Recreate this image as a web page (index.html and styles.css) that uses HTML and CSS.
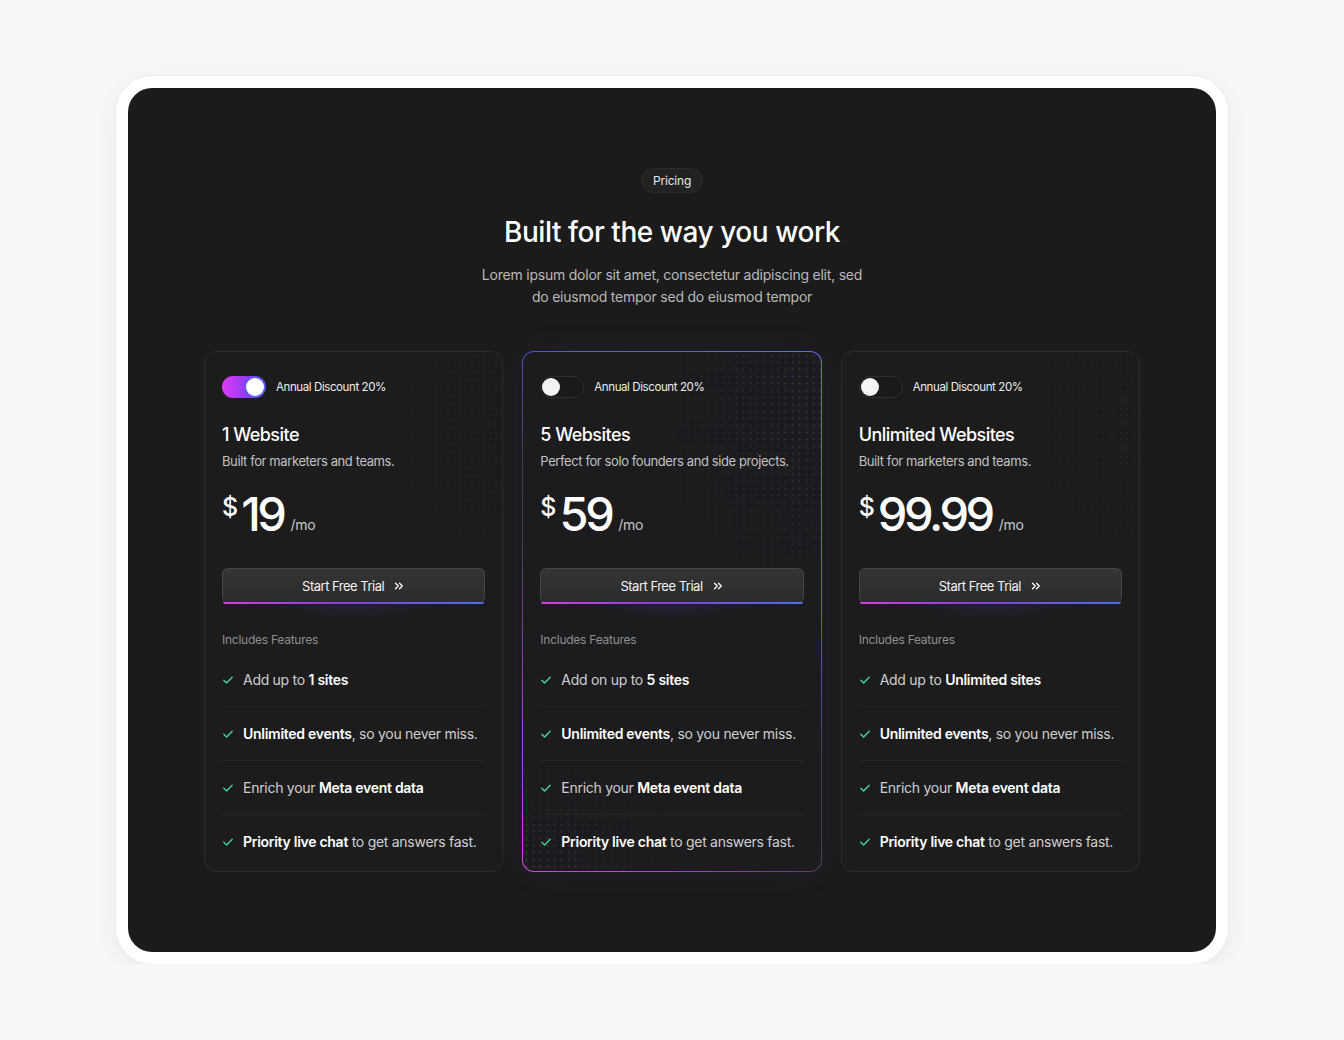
FILE: index.html
```html
<!DOCTYPE html>
<html lang="en">
<head>
<meta charset="utf-8">
<title>Pricing</title>
<link rel="stylesheet" href="styles.css">
</head>
<body>
<div class="frame">
  <main class="panel">
    <header class="head">
      <span class="pill">Pricing</span>
      <h1 class="title">Built for the way you work</h1>
      <p class="sub">Lorem ipsum dolor sit amet, consectetur adipiscing elit, sed do eiusmod tempor sed do eiusmod tempor</p>
    </header>

    <section class="cards">
      <article class="card">
        <div class="toggle-row"><span class="toggle on"><span class="knob"></span></span><span class="toggle-label">Annual Discount 20%</span></div>
        <h2 class="plan">1 Website</h2>
        <p class="desc">Built for marketers and teams.</p>
        <div class="price"><span class="cur">$</span><span class="amt">19</span><span class="per">/mo</span></div>
        <button class="cta">Start Free Trial <svg width="12" height="12" viewBox="0 0 12 12"><path d="M2.5 3.2 L5.3 6 L2.5 8.8 M6.5 3.2 L9.3 6 L6.5 8.8" fill="none" stroke="#fff" stroke-width="1.3" stroke-linecap="round" stroke-linejoin="round"/></svg></button>
        <p class="inc">Includes Features</p>
        <ul class="feats">
          <li><svg class="chk" viewBox="0 0 12 12"><path d="M1.8 6.3 L4.6 9 L10.2 3.2"/></svg><span>Add up to <b>1 sites</b></span></li>
          <li><svg class="chk" viewBox="0 0 12 12"><path d="M1.8 6.3 L4.6 9 L10.2 3.2"/></svg><span><b>Unlimited events</b>, so you never miss.</span></li>
          <li><svg class="chk" viewBox="0 0 12 12"><path d="M1.8 6.3 L4.6 9 L10.2 3.2"/></svg><span>Enrich your <b>Meta event data</b></span></li>
          <li><svg class="chk" viewBox="0 0 12 12"><path d="M1.8 6.3 L4.6 9 L10.2 3.2"/></svg><span><b>Priority live chat</b> to get answers fast.</span></li>
        </ul>
      </article>

      <article class="card featured">
        <div class="toggle-row"><span class="toggle"><span class="knob"></span></span><span class="toggle-label">Annual Discount 20%</span></div>
        <h2 class="plan">5 Websites</h2>
        <p class="desc">Perfect for solo founders and side projects.</p>
        <div class="price"><span class="cur">$</span><span class="amt">59</span><span class="per">/mo</span></div>
        <button class="cta">Start Free Trial <svg width="12" height="12" viewBox="0 0 12 12"><path d="M2.5 3.2 L5.3 6 L2.5 8.8 M6.5 3.2 L9.3 6 L6.5 8.8" fill="none" stroke="#fff" stroke-width="1.3" stroke-linecap="round" stroke-linejoin="round"/></svg></button>
        <p class="inc">Includes Features</p>
        <ul class="feats">
          <li><svg class="chk" viewBox="0 0 12 12"><path d="M1.8 6.3 L4.6 9 L10.2 3.2"/></svg><span>Add on up to <b>5 sites</b></span></li>
          <li><svg class="chk" viewBox="0 0 12 12"><path d="M1.8 6.3 L4.6 9 L10.2 3.2"/></svg><span><b>Unlimited events</b>, so you never miss.</span></li>
          <li><svg class="chk" viewBox="0 0 12 12"><path d="M1.8 6.3 L4.6 9 L10.2 3.2"/></svg><span>Enrich your <b>Meta event data</b></span></li>
          <li><svg class="chk" viewBox="0 0 12 12"><path d="M1.8 6.3 L4.6 9 L10.2 3.2"/></svg><span><b>Priority live chat</b> to get answers fast.</span></li>
        </ul>
      </article>

      <article class="card">
        <div class="toggle-row"><span class="toggle"><span class="knob"></span></span><span class="toggle-label">Annual Discount 20%</span></div>
        <h2 class="plan">Unlimited Websites</h2>
        <p class="desc">Built for marketers and teams.</p>
        <div class="price"><span class="cur">$</span><span class="amt">99.99</span><span class="per">/mo</span></div>
        <button class="cta">Start Free Trial <svg width="12" height="12" viewBox="0 0 12 12"><path d="M2.5 3.2 L5.3 6 L2.5 8.8 M6.5 3.2 L9.3 6 L6.5 8.8" fill="none" stroke="#fff" stroke-width="1.3" stroke-linecap="round" stroke-linejoin="round"/></svg></button>
        <p class="inc">Includes Features</p>
        <ul class="feats">
          <li><svg class="chk" viewBox="0 0 12 12"><path d="M1.8 6.3 L4.6 9 L10.2 3.2"/></svg><span>Add up to <b>Unlimited sites</b></span></li>
          <li><svg class="chk" viewBox="0 0 12 12"><path d="M1.8 6.3 L4.6 9 L10.2 3.2"/></svg><span><b>Unlimited events</b>, so you never miss.</span></li>
          <li><svg class="chk" viewBox="0 0 12 12"><path d="M1.8 6.3 L4.6 9 L10.2 3.2"/></svg><span>Enrich your <b>Meta event data</b></span></li>
          <li><svg class="chk" viewBox="0 0 12 12"><path d="M1.8 6.3 L4.6 9 L10.2 3.2"/></svg><span><b>Priority live chat</b> to get answers fast.</span></li>
        </ul>
      </article>
    </section>
  </main>
</div>
</body>
</html>
```

FILE: styles.css
```css
* { box-sizing: border-box; }
html, body { margin: 0; padding: 0; }
body {
  background: #f7f7f7;
  font-family: Inter, "Noto Sans", sans-serif;
  color: #fff;
  padding-top: 76px;
}
.frame {
  width: 1112px;
  margin: 0 auto;
  background: #fff;
  border-radius: 36px;
  padding: 12px;
  box-shadow: 0 0 0 1px #ececec, 0 6px 24px rgba(0,0,0,0.06);
}
.panel {
  background: #1b1b1b;
  border-radius: 24px;
  padding: 80px 0 80px;
}
.head { display: flex; flex-direction: column; align-items: center; text-align: center; }
.pill {
  font-size: 12px;
  line-height: 15px;
  padding: 4px 11px;
  border-radius: 999px;
  background: #222;
  border: 1px solid #2b2b2b;
  color: #e6e6e6;
  letter-spacing: -0.2px;
}
.title {
  margin: 22px 0 0;
  font-size: 28px;
  line-height: 34px;
  font-weight: 500;
  letter-spacing: -0.45px;
  color: #fff;
}
.sub {
  margin: 15px 0 0;
  max-width: 386px;
  font-size: 14px;
  line-height: 22px;
  letter-spacing: -0.22px;
  color: #b9b9b9;
}
.cards {
  width: 936px;
  margin: 43px auto 0;
  display: grid;
  grid-template-columns: repeat(3, 1fr);
  gap: 19px;
}
.card {
  position: relative;
  overflow: hidden;
  border: 1px solid #2c2c2c;
  border-radius: 12px;
  background: #1c1c1d;
  padding: 24px 17px 4px;
}
.card::before {
  content: "";
  position: absolute;
  inset: 0;
  background-image: radial-gradient(circle, rgba(150,150,175,0.07) 0.8px, transparent 1.2px);
  background-size: 6px 6px;
  -webkit-mask-image: radial-gradient(ellipse 140px 160px at 100% 15%, #000, transparent);
  mask-image: radial-gradient(ellipse 140px 160px at 100% 15%, #000, transparent);
  pointer-events: none;
}
.card > * { position: relative; }
.featured {
  border: 1.5px solid transparent;
  background:
    linear-gradient(#1c1b1e, #1c1b1e) padding-box,
    linear-gradient(45deg, #e040ee 0%, #b23ce0 18%, #43404c 40%, #3d3f4c 50%, #4d5ae6 68%, #5a6ef8 100%) border-box;
  box-shadow: 0 0 30px rgba(110, 60, 200, 0.10);
}
.featured::before {
  background-image:
    radial-gradient(circle, rgba(140,100,255,0.3) 0.8px, transparent 1.3px);
  background-size: 7px 7px;
  -webkit-mask-image: radial-gradient(ellipse 180px 220px at 100% 10%, #000, transparent);
  mask-image: radial-gradient(ellipse 180px 220px at 100% 10%, #000, transparent);
}
.featured::after {
  content: "";
  position: absolute;
  inset: 0;
  background-image: radial-gradient(circle, rgba(220,80,240,0.28) 0.8px, transparent 1.3px);
  background-size: 7px 7px;
  -webkit-mask-image: radial-gradient(ellipse 160px 120px at 0% 100%, #000, transparent);
  mask-image: radial-gradient(ellipse 160px 120px at 0% 100%, #000, transparent);
  pointer-events: none;
}
.toggle-row { display: flex; align-items: center; gap: 10px; height: 22px; }
.toggle {
  position: relative;
  width: 44px;
  height: 22px;
  border-radius: 999px;
  background: #1a1a1a;
  border: 1px solid #2f2f2f;
  flex: none;
}
.toggle .knob {
  position: absolute;
  top: 1px;
  left: 1px;
  width: 18px;
  height: 18px;
  border-radius: 50%;
  background: #f4f4f4;
}
.toggle.on {
  border: none;
  background: linear-gradient(90deg, #de3cf6 0%, #8a3df2 60%, #5a45ee 100%);
}
.toggle.on .knob {
  top: 2px;
  left: auto;
  right: 2px;
  background: #fff;
  box-shadow: 0 0 0 1.5px #5c5ff0;
}
.toggle-label { font-size: 11.5px; color: #ededed; letter-spacing: -0.4px; white-space: nowrap; }
.plan {
  margin: 25px 0 0;
  font-size: 18px;
  line-height: 24px;
  font-weight: 500;
  letter-spacing: -0.55px;
  color: #fff;
}
.desc {
  margin: 5px 0 0;
  font-size: 13px;
  line-height: 18px;
  letter-spacing: -0.4px;
  white-space: nowrap;
  color: #c2c2c2;
}
.price {
  margin-top: 20px;
  height: 48px;
  display: flex;
  align-items: flex-end;
}
.cur {
  align-self: flex-start;
  font-size: 25px;
  line-height: 26px;
  margin-top: 4px;
  margin-right: 3px;
  font-weight: 500;
}
.amt {
  font-size: 47px;
  line-height: 48px;
  font-weight: 500;
  letter-spacing: -3.4px;
}
.per {
  font-size: 14px;
  line-height: 14px;
  color: #c8c8c8;
  letter-spacing: -0.3px;
  margin-left: 7px;
  margin-bottom: 6px;
}
.cta {
  display: flex;
  align-items: center;
  justify-content: center;
  gap: 9px;
  width: 100%;
  height: 35px;
  margin-top: 30px;
  padding: 0;
  font-family: inherit;
  font-size: 13px;
  color: #f2f2f2;
  letter-spacing: -0.5px;
  border-radius: 6px;
  border: 1px solid #454545;
  border-bottom: none;
  background: linear-gradient(180deg, #343434, #2b2b2c);
  position: relative;
  cursor: pointer;
}
.cta::after {
  content: "";
  position: absolute;
  left: 0;
  right: 0;
  bottom: -1px;
  height: 2px;
  border-radius: 0 0 6px 6px;
  background: linear-gradient(90deg, #d93ae6 0%, #8a3fe0 45%, #4a6ef0 100%);
}
.cta::before {
  content: "";
  position: absolute;
  left: 20%;
  right: 20%;
  bottom: -16px;
  height: 14px;
  background: radial-gradient(ellipse at top, rgba(110,70,230,0.12), transparent 70%);
}
.inc {
  margin: 29px 0 0;
  font-size: 12px;
  line-height: 16px;
  letter-spacing: -0.25px;
  color: #8f8f8f;
}
.feats {
  list-style: none;
  margin: 5px 0 0;
  padding: 0;
}
.feats li {
  display: flex;
  align-items: center;
  gap: 9px;
  padding: 16px 0;
  font-size: 14px;
  line-height: 21px;
  letter-spacing: -0.28px;
  white-space: nowrap;
  color: #cfcfcf;
}
.feats li + li { border-top: 1px solid #262627; }
.feats li:last-child { padding-bottom: 15px; }
.feats b { font-weight: 600; color: #fff; }
.chk {
  width: 12px;
  height: 12px;
  flex: none;
  fill: none;
  stroke: #3fd59a;
  stroke-width: 1.4;
  stroke-linecap: round;
  stroke-linejoin: round;
}
```
